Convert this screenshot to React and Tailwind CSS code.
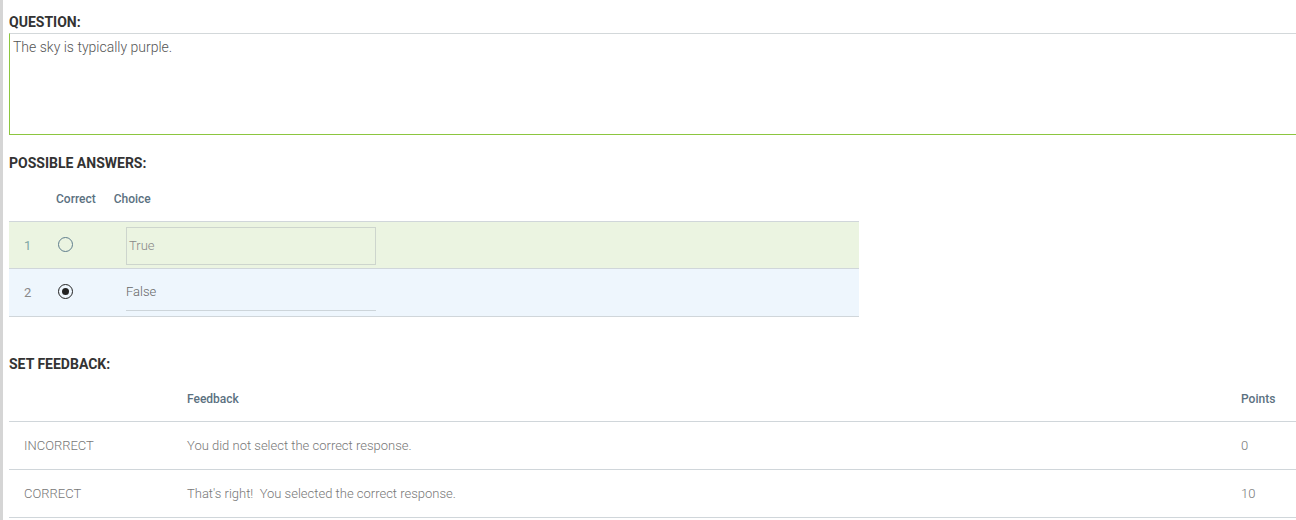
import { useState } from 'react';

const answers = [
  { id: 1, label: 'True', correct: false },
  { id: 2, label: 'False', correct: true },
];

const feedback = [
  { id: 'incorrect', label: 'INCORRECT', text: 'You did not select the correct response.', points: 0 },
  { id: 'correct', label: 'CORRECT', text: "That's right!\u00a0 You selected the correct response.", points: 10 },
];

function Radio({ checked }) {
  if (checked) {
    return (
      <span className="flex h-[15px] w-[15px] items-center justify-center rounded-full border-[1.5px] border-[#222]">
        <span className="h-[7px] w-[7px] rounded-full bg-[#222]" />
      </span>
    );
  }
  return <span className="block h-[15px] w-[15px] rounded-full border-[1.5px] border-[#5f7d8c]" />;
}

function App() {
  const [question, setQuestion] = useState('The sky is typically purple.');

  return (
    <div className="flex h-[520px] w-full overflow-hidden bg-white font-['Roboto',sans-serif]">
      <div className="w-[3px] shrink-0 bg-[#d5d5d5]" />

      <div className="w-[1330px] shrink-0 pl-[6px]">
        {/* Question */}
        <h2 className="mt-[13px] text-[14px] leading-[18px] font-bold text-[#333]">QUESTION:</h2>
        <textarea
          value={question}
          onChange={(e) => setQuestion(e.target.value)}
          className="mt-[2px] block h-[102px] w-full resize-none border border-t-[#d3d8da] border-r-[#d3d8da] border-b-[#8cc63f] border-l-[#8cc63f] px-[3px] pt-[4px] text-[14px] leading-[18px] font-light text-[#555] outline-none"
        />

        {/* Possible answers */}
        <h2 className="mt-[19px] text-[14px] leading-[18px] font-bold text-[#333]">POSSIBLE ANSWERS:</h2>
        <div className="w-[850px]">
          <div className="flex h-[49px] items-center pt-[4px] text-[12px] font-medium text-[#5b7181]">
            <span className="ml-[47px]">Correct</span>
            <span className="ml-[18px]">Choice</span>
          </div>
          {answers.map((a) => (
            <div
              key={a.id}
              className={`flex h-[48px] items-start border-b border-[#d0d6da] pt-[5px] ${
                a.id === 1 ? 'border-t bg-[#ebf4e1]' : 'bg-[#eef6fd]'
              }`}
            >
              <span
                className={`ml-[15px] flex h-[37px] w-[34px] items-center text-[13px] ${
                  a.id === 1 ? 'text-[#7fa7a4]' : 'text-[#888]'
                }`}
              >
                {a.id}
              </span>
              <span className="flex h-[34px] items-center">
                <Radio checked={a.correct} />
              </span>
              <div
                className={`ml-[53px] flex w-[250px] items-center text-[13px] font-light ${
                  a.id === 1
                    ? 'h-[38px] border border-[#cdd5cd] px-[2px] text-[#888]'
                    : 'h-[37px] border-b border-[#cdd5da] text-[#666]'
                }`}
              >
                {a.label}
              </div>
            </div>
          ))}
        </div>

        {/* Feedback */}
        <h2 className="mt-[38px] text-[14px] leading-[18px] font-bold text-[#333]">SET FEEDBACK:</h2>
        <div>
          <div className="flex h-[49px] items-center border-b border-[#d0d6da] pt-[4px] pl-[15px] text-[12px] font-medium text-[#5b7181]">
            <span className="w-[163px]" />
            <span className="w-[1054px]">Feedback</span>
            <span>Points</span>
          </div>
          {feedback.map((f) => (
            <div
              key={f.id}
              className="flex h-[48px] items-center border-b border-[#d0d6da] pl-[15px] text-[13px] font-light text-[#777]"
            >
              <span className="w-[163px]">{f.label}</span>
              <span className="w-[1054px]">{f.text}</span>
              <span>{f.points}</span>
            </div>
          ))}
        </div>
      </div>
    </div>
  );
}

export default App;
